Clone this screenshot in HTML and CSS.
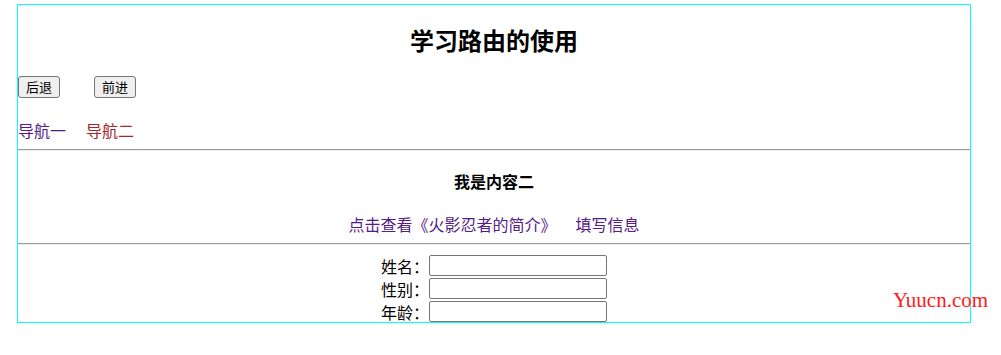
FILE: index.html
```html
<!DOCTYPE html>
<html lang="zh-CN">
<head>
    <meta charset="UTF-8">
    <title>学习路由的使用</title>
    <link rel="stylesheet" href="styles.css">
</head>
<body>
<div class="app">
    <h2 class="title">学习路由的使用</h2>
    <div class="btns">
        <button>后退</button>
        <button>前进</button>
    </div>
    <div class="nav">
        <a href="#" class="visited">导航一</a>
        <a href="#" class="active">导航二</a>
    </div>
    <hr>
    <h4 class="sub">我是内容二</h4>
    <div class="links">
        <a href="#" class="visited">点击查看《火影忍者的简介》</a>
        <a href="#" class="visited">填写信息</a>
    </div>
    <hr>
    <form class="info">
        <div class="row"><label>姓名：</label><input type="text"></div>
        <div class="row"><label>性别：</label><input type="text"></div>
        <div class="row"><label>年龄：</label><input type="text"></div>
    </form>
</div>
<span class="mark">Yuucn.com</span>
</body>
</html>
```

FILE: styles.css
```css
body {
    margin: 0;
    padding: 4px 0 0 17px;
    font-family: "Noto Sans CJK SC", "Liberation Sans", sans-serif;
    font-size: 16px;
    color: #000000;
}

.app {
    width: 952px;
    height: 317px;
    border: 1px solid #00ffff;
}

.title {
    margin: 18px 0 0;
    font-size: 24px;
    line-height: 34px;
    text-align: center;
}

.btns {
    margin-top: 19px;
    display: flex;
    gap: 34px;
}

.btns button {
    width: 42px;
    height: 22px;
    padding: 0;
    font-family: "Noto Sans CJK SC", sans-serif;
    font-size: 13px;
    line-height: 18px;
    color: #000000;
    background-color: #efefef;
    border: 1px solid #767676;
    border-radius: 3px;
}

.nav {
    margin-top: 21px;
    display: flex;
    gap: 20px;
    line-height: 22px;
}

a {
    text-decoration: none;
}

a.visited {
    color: #551a8b;
}

a.active {
    color: #a5282a;
}

hr {
    margin: 8px 0 0;
    border: none;
    border-top: 1px solid #9a9a9a;
    border-bottom: 1px solid #eeeeee;
}

.sub {
    margin: 19px 0 0;
    font-size: 16px;
    line-height: 22px;
    text-align: center;
}

.links {
    margin-top: 21px;
    display: flex;
    justify-content: center;
    gap: 19px;
    line-height: 22px;
}

.info {
    margin: 9px 0 0;
}

.row {
    height: 23px;
    display: flex;
    justify-content: center;
    align-items: center;
}

.row label {
    line-height: 22px;
}

.row input {
    width: 178px;
    height: 21px;
    box-sizing: border-box;
    margin: 0;
    border: 1px solid #767676;
    border-radius: 2px;
}

.mark {
    position: absolute;
    left: 893px;
    top: 288px;
    font-family: "Liberation Serif", serif;
    font-size: 21px;
    color: #ff1a1a;
}
```
